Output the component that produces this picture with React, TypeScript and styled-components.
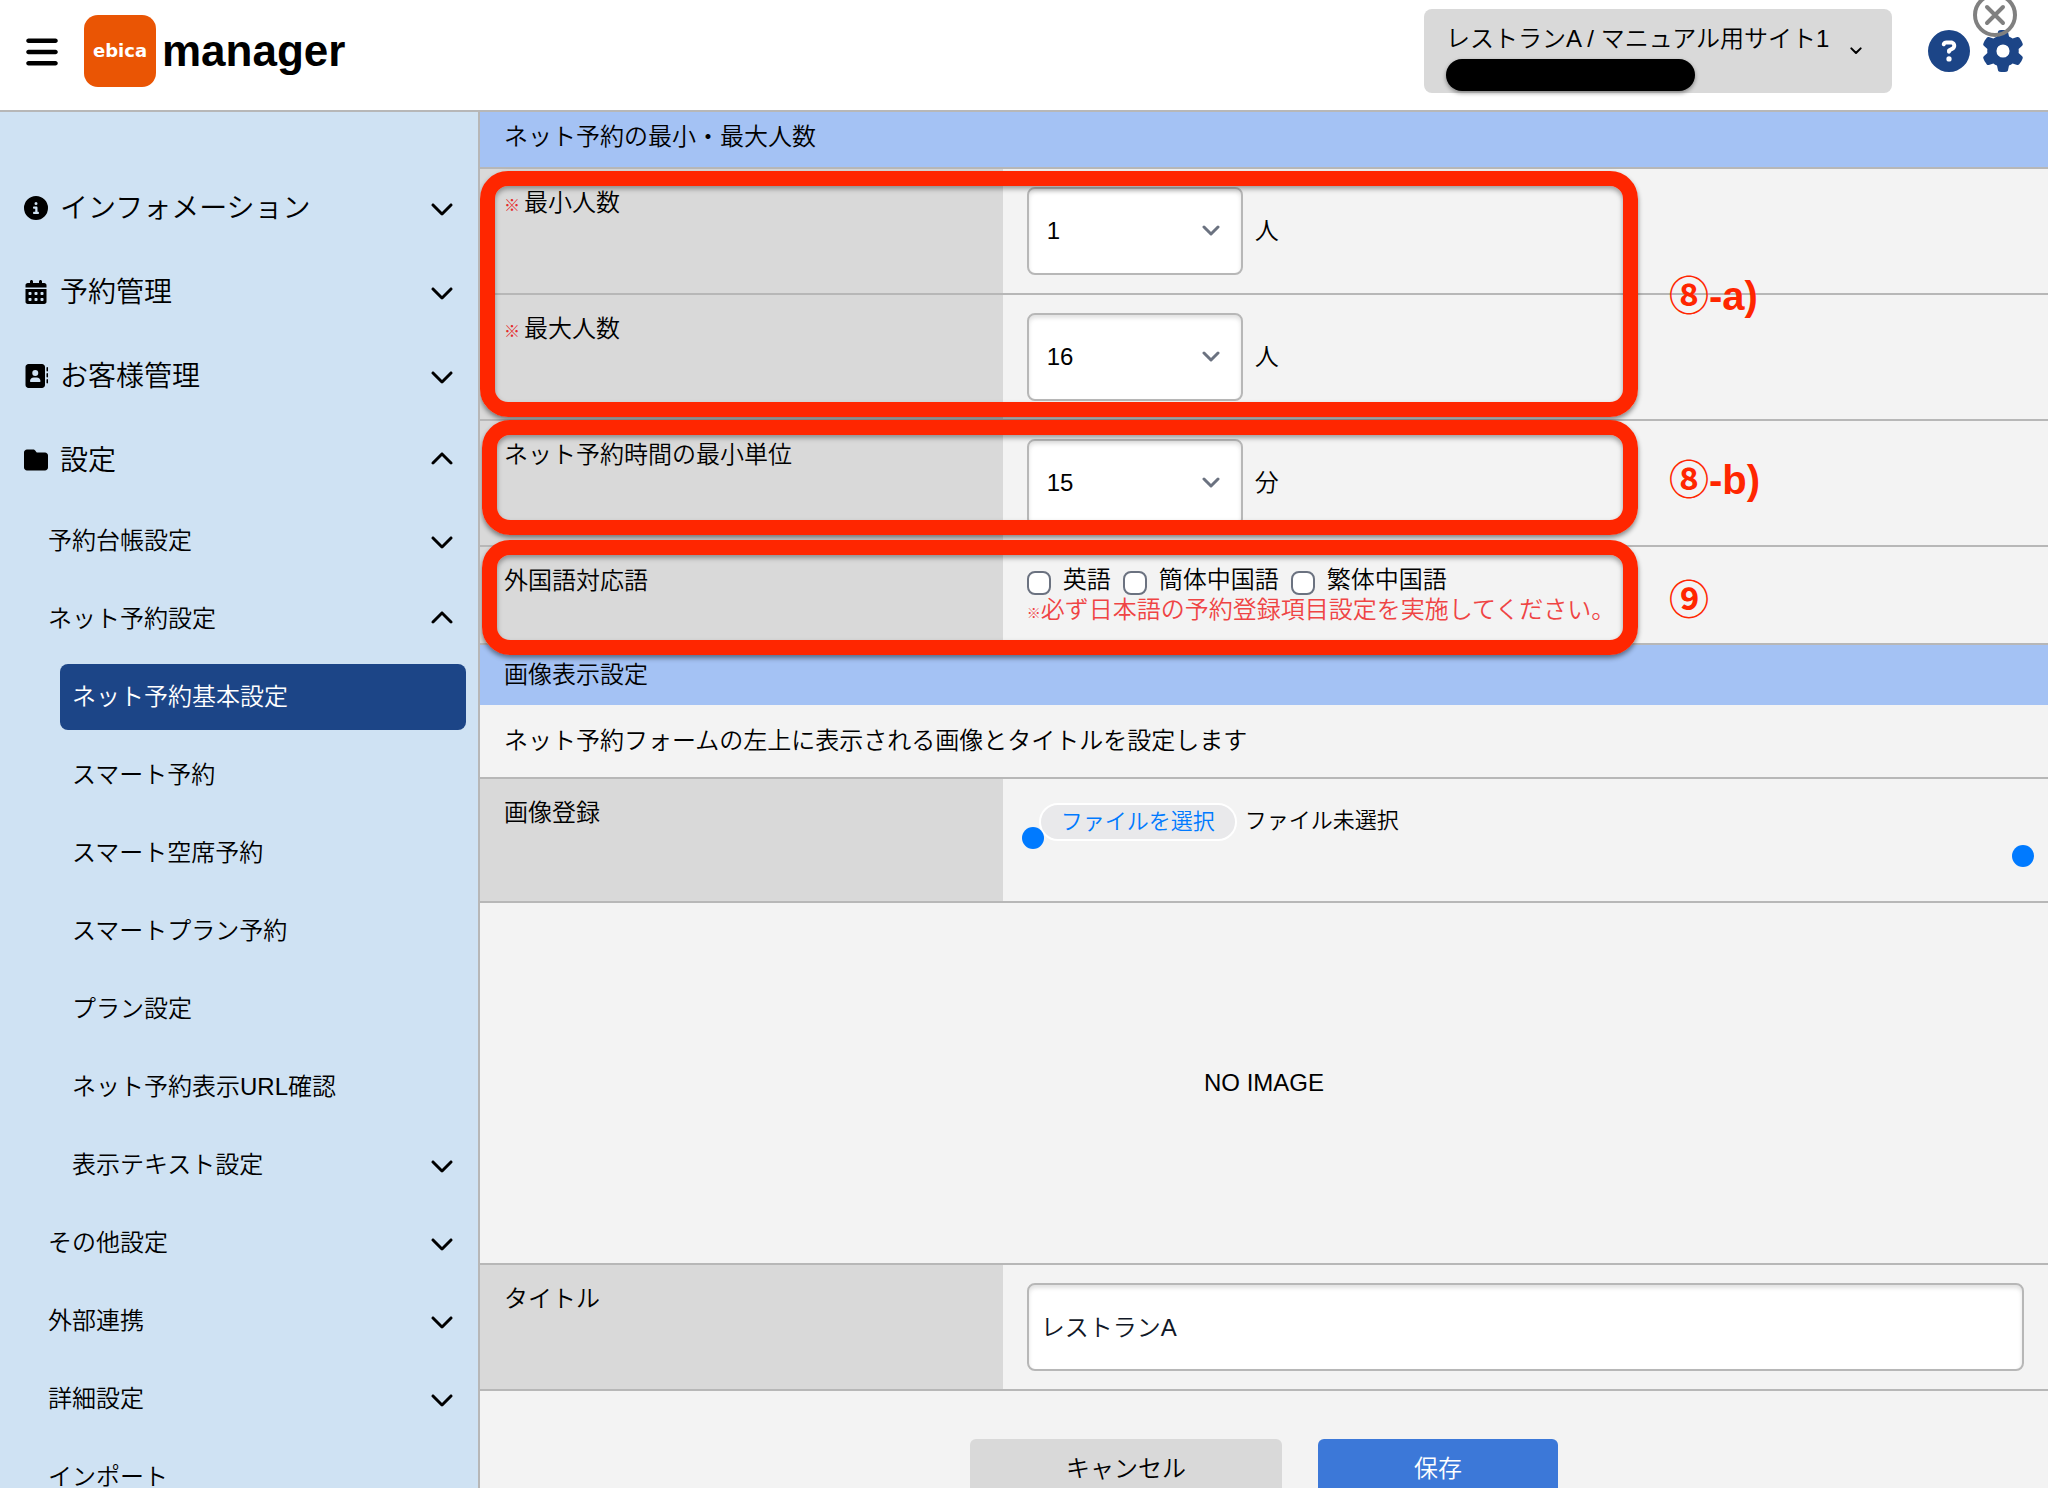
import React from "react";
import styled, { createGlobalStyle } from "styled-components";
import {
  FaAddressBook,
  FaBars,
  FaCalendarDays,
  FaChevronDown,
  FaChevronUp,
  FaCircleInfo,
  FaCircleQuestion,
  FaFolder,
  FaGear,
} from "react-icons/fa6";

const color = {
  line: "#b7b7b7",
  sidebar: "#cfe2f3",
  section: "#a4c2f4",
  label: "#d9d9d9",
  page: "#f3f3f3",
  navy: "#1c4587",
  save: "#3c78d8",
  mark: "#ff2600",
  note: "#ef4444",
  handle: "#007aff",
};

const GlobalStyle = createGlobalStyle`
  *, *::before, *::after { box-sizing: border-box; }
  body {
    margin: 0;
    background: ${color.page};
    color: #000;
    font-family: "Liberation Sans", "Noto Sans CJK JP", sans-serif;
    font-size: 24px;
    font-weight: 350;
    line-height: 36px;
  }
  button, input, select { font: inherit; color: inherit; margin: 0; }
  button { border: 0; background: none; padding: 0; cursor: pointer; }
`;

const Shell = styled.div`
  display: flex;
  flex-direction: column;
  height: 100vh;
  overflow: hidden;
`;

const Header = styled.header`
  position: relative;
  z-index: 2;
  flex: none;
  display: flex;
  align-items: flex-start;
  height: 112px;
  padding: 9px 24px 0;
  background: #fff;
  border-bottom: 2px solid ${color.line};
`;

const MenuButton = styled.button`
  display: flex;
  align-items: center;
  height: 86px;
  margin-right: 24px;
  font-size: 36px;
`;

const Brand = styled.a`
  display: flex;
  align-items: center;
  gap: 6px;
  height: 84px;
  color: #000;
  font-size: 44px;
  font-weight: 700;
  line-height: 48px;
  text-decoration: none;
`;

const BrandMark = styled.span`
  display: flex;
  align-items: center;
  justify-content: center;
  width: 72px;
  height: 72px;
  border-radius: 14px;
  background: #ea5504;
  color: #fff;
  font-family: "DejaVu Sans", sans-serif;
  font-size: 18px;
`;

const HeaderTools = styled.div`
  display: flex;
  align-items: center;
  margin-left: auto;
  height: 84px;
`;

const SiteButton = styled.button`
  display: flex;
  align-items: center;
  justify-content: space-between;
  width: 468px;
  height: 84px;
  margin-right: 36px;
  padding: 0 30px 0 22px;
  border-radius: 8px;
  background: ${color.label};
  text-align: left;
  white-space: nowrap;
`;

const SiteLines = styled.span`
  display: flex;
  flex-direction: column;
  padding-top: 10px;
  height: 84px;
  line-height: 40px;
`;

const Redacted = styled.span`
  width: 249px;
  height: 32px;
  border-radius: 16px;
  background: #000;
  box-shadow: 0 2px 4px rgba(0, 0, 0, 0.4);
`;

const ToolButton = styled.button`
  position: relative;
  display: flex;
  margin-right: 12px;
  color: ${color.navy};
  font-size: 42px;

  &:last-child {
    margin-right: 0;
  }
`;

const CloseButton = styled.button`
  position: absolute;
  top: -7px;
  right: 31px;
  display: flex;
`;

const Body = styled.div`
  flex: 1;
  display: flex;
  min-height: 0;
`;

const Sidebar = styled.nav`
  flex: none;
  width: 480px;
  padding: 54px 12px 0 0;
  background: ${color.sidebar};
  border-right: 2px solid ${color.line};
`;

const List = styled.ul`
  margin: 0;
  padding: 0;
  list-style: none;
`;

const NavGroup = styled.button`
  display: flex;
  align-items: center;
  gap: 12px;
  width: 100%;
  height: 84px;
  padding: 0 12px 0 24px;
  font-size: 28px;

  span {
    padding-top: 2px;
  }
  svg {
    width: 24px;
    height: 24px;
  }
  svg:last-child {
    margin-left: auto;
  }
`;

const NavItem = styled.a<{ $level: 1 | 2; $active?: boolean }>`
  display: flex;
  align-items: center;
  justify-content: space-between;
  height: 66px;
  margin: 0 0 12px ${(p) => (p.$level === 2 ? 60 : 36)}px;
  padding: 0 12px;
  border-radius: 8px;
  background: ${(p) => (p.$active ? color.navy : "transparent")};
  color: ${(p) => (p.$active ? "#fff" : "#000")};
  text-decoration: none;
`;

const SubList = styled(List)`
  padding-top: 6px;

  ${NavItem} svg {
    flex: none;
    width: 24px;
    height: 24px;
  }
`;

const Main = styled.main`
  flex: 1;
  min-width: 0;
  overflow: hidden;
`;

/* The form is scrolled a little way under the header. */
const Form = styled.form`
  margin-top: -5px;
`;

const SectionTitle = styled.h2<{ $ruled?: boolean }>`
  margin: 0;
  padding: 12px 24px;
  background: ${color.section};
  border-bottom: ${(p) => (p.$ruled ? `2px solid ${color.line}` : "0")};
  font-size: 24px;
  font-weight: inherit;
`;

const Description = styled.p`
  margin: 0;
  padding: 18px 24px;
  border-bottom: 2px solid ${color.line};
`;

const Group = styled.div`
  position: relative;
`;

const Row = styled.div`
  display: grid;
  grid-template-columns: 1fr 2fr;
  border-bottom: 2px solid ${color.line};
`;

const LabelCell = styled.div`
  padding: 16px 24px;
  background: ${color.label};
`;

const ValueCell = styled.div`
  position: relative;
  display: flex;
  align-items: center;
  gap: 12px;
  min-width: 0;
  padding: 18px 24px;
`;

const StackCell = styled(ValueCell)`
  flex-direction: column;
  align-items: flex-start;
  gap: 0;
  line-height: 30px;
`;

const Required = styled.span`
  margin-right: 4px;
  color: #e52b2b;
  font-size: 16px;
  line-height: 16px;
`;

const SelectBox = styled.span`
  position: relative;
  width: 216px;

  svg {
    position: absolute;
    top: 38px;
    right: 23px;
    pointer-events: none;
  }
`;

const fieldFrame = `
  width: 100%;
  height: 88px;
  border: 2px solid ${color.line};
  border-radius: 8px;
  background: #fff;
  box-shadow: inset 0 3px 4px rgba(0, 0, 0, 0.12);
`;

const Select = styled.select`
  ${fieldFrame}
  appearance: none;
  padding: 0 18px;
`;

const TextInput = styled.input`
  ${fieldFrame}
  padding: 0 12px 4px;
  color: #111827;
`;

const Checks = styled.div`
  display: flex;
  gap: 12px;
`;

const Check = styled.label`
  display: flex;
  gap: 12px;
`;

const CheckInput = styled.input`
  appearance: none;
  width: 24px;
  height: 24px;
  margin-top: 6px;
  border: 2px solid #6b7280;
  border-radius: 8px;
  background: #fff;
`;

const Note = styled.p`
  margin: 0;
  color: ${color.note};

  small {
    font-size: 14px;
    font-weight: 700;
    line-height: 16px;
  }
`;

const FileCell = styled(ValueCell)`
  align-items: flex-start;
  gap: 8px;
  height: 122px;
  padding: 24px 36px;
  font-size: 22px;
`;

const FileInput = styled.input`
  position: absolute;
  width: 1px;
  height: 1px;
  opacity: 0;
`;

const FileButton = styled.label`
  padding: 0 20px;
  border: 2px solid #fff;
  border-radius: 20px;
  background: #e9e9eb;
  color: ${color.handle};
  line-height: 34px;
`;

const Handle = styled.span<{ $end?: boolean }>`
  position: absolute;
  top: ${(p) => (p.$end ? 66 : 48)}px;
  ${(p) => (p.$end ? "right: 14px" : "left: 19px")};
  width: 22px;
  height: 22px;
  border-radius: 50%;
  background: ${color.handle};
`;

const Preview = styled.div`
  display: flex;
  align-items: center;
  justify-content: center;
  height: 362px;
  border-bottom: 2px solid ${color.line};
`;

const Actions = styled.div`
  display: flex;
  justify-content: center;
  gap: 36px;
  padding: 48px 24px;
`;

const ActionButton = styled.button<{ $primary?: boolean }>`
  width: ${(p) => (p.$primary ? 240 : 312)}px;
  height: 60px;
  border-radius: 6px;
  background: ${(p) => (p.$primary ? color.save : color.label)};
  color: ${(p) => (p.$primary ? "#fff" : "#000")};
`;

const Callout = styled.div<{ $top: number; $bottom: number; $left: number }>`
  position: absolute;
  z-index: 1;
  top: ${(p) => p.$top}px;
  right: 410px;
  bottom: ${(p) => p.$bottom}px;
  left: ${(p) => p.$left}px;
  display: flex;
  align-items: center;
  border: 15px solid ${color.mark};
  border-radius: 28px;
  box-shadow: 0 3px 5px rgba(0, 0, 0, 0.45), inset 0 3px 5px rgba(0, 0, 0, 0.35);
  pointer-events: none;
`;

const CalloutText = styled.strong`
  position: absolute;
  left: calc(100% + 46px);
  padding-top: 4px;
  color: ${color.mark};
  font-size: 40px;
  font-weight: 700;
  line-height: 48px;
  white-space: nowrap;
`;

function SmallChevron({ width, stroke }: { width: number; stroke: string }) {
  return (
    <svg width={width} height={(width * 2) / 3} viewBox="0 0 18 12" fill="none" aria-hidden="true">
      <path d="M2 2l7 7 7-7" stroke={stroke} strokeWidth="3" strokeLinecap="round" strokeLinejoin="round" />
    </svg>
  );
}

function UnitSelect({ id, value, unit }: { id: string; value: string; unit: string }) {
  return (
    <ValueCell>
      <SelectBox>
        <Select id={id} defaultValue={value}>
          <option>{value}</option>
        </Select>
        <SmallChevron width={18} stroke="#6b7280" />
      </SelectBox>
      <span>{unit}</span>
    </ValueCell>
  );
}

function Mark({ top, bottom, left = 2, children }: { top: number; bottom: number; left?: number; children: string }) {
  return (
    <Callout $top={top} $bottom={bottom} $left={left}>
      <CalloutText>{children}</CalloutText>
    </Callout>
  );
}

type Item = { text: string; level: 1 | 2; open?: boolean; active?: boolean };

const groups = [
  { text: "インフォメーション", icon: FaCircleInfo, open: false },
  { text: "予約管理", icon: FaCalendarDays, open: false },
  { text: "お客様管理", icon: FaAddressBook, open: false },
  { text: "設定", icon: FaFolder, open: true },
];

const items: Item[] = [
  { text: "予約台帳設定", level: 1, open: false },
  { text: "ネット予約設定", level: 1, open: true },
  { text: "ネット予約基本設定", level: 2, active: true },
  { text: "スマート予約", level: 2 },
  { text: "スマート空席予約", level: 2 },
  { text: "スマートプラン予約", level: 2 },
  { text: "プラン設定", level: 2 },
  { text: "ネット予約表示URL確認", level: 2 },
  { text: "表示テキスト設定", level: 2, open: false },
  { text: "その他設定", level: 1, open: false },
  { text: "外部連携", level: 1, open: false },
  { text: "詳細設定", level: 1, open: false },
  { text: "インポート", level: 1 },
];

const languages = ["英語", "簡体中国語", "繁体中国語"];

export default function App() {
  return (
    <Shell>
      <GlobalStyle />
      <Header>
        <MenuButton type="button" aria-label="メニュー">
          <FaBars />
        </MenuButton>
        <Brand href="#">
          <BrandMark>ebica</BrandMark>
          manager
        </Brand>
        <HeaderTools>
          <SiteButton type="button">
            <SiteLines>
              レストランA / マニュアル用サイト1
              <Redacted />
            </SiteLines>
            <SmallChevron width={12} stroke="#000" />
          </SiteButton>
          <ToolButton type="button" aria-label="ヘルプ">
            <FaCircleQuestion />
          </ToolButton>
          <ToolButton type="button" aria-label="設定">
            <FaGear />
          </ToolButton>
        </HeaderTools>
        <CloseButton type="button" aria-label="閉じる">
          <svg width="44" height="44" viewBox="0 0 44 44" fill="none" stroke="#808080">
            <circle cx="22" cy="22" r="20" strokeWidth="4" />
            <path d="M14 14l16 16M30 14L14 30" strokeWidth="4" strokeLinecap="round" />
          </svg>
        </CloseButton>
      </Header>

      <Body>
        <Sidebar>
          <List>
            {groups.map(({ text, icon: Icon, open }) => (
              <li key={text}>
                <NavGroup type="button" aria-expanded={open}>
                  <Icon />
                  <span>{text}</span>
                  {open ? <FaChevronUp /> : <FaChevronDown />}
                </NavGroup>
              </li>
            ))}
          </List>
          <SubList>
            {items.map(({ text, level, open, active }) => (
              <li key={text}>
                <NavItem href="#" $level={level} $active={active}>
                  {text}
                  {open === true && <FaChevronUp />}
                  {open === false && <FaChevronDown />}
                </NavItem>
              </li>
            ))}
          </SubList>
        </Sidebar>

        <Main>
          <Form onSubmit={(e) => e.preventDefault()}>
            <SectionTitle $ruled>ネット予約の最小・最大人数</SectionTitle>
            <Group>
              <Row>
                <LabelCell>
                  <Required>※</Required>
                  <label htmlFor="min">最小人数</label>
                </LabelCell>
                <UnitSelect id="min" value="1" unit="人" />
              </Row>
              <Row>
                <LabelCell>
                  <Required>※</Required>
                  <label htmlFor="max">最大人数</label>
                </LabelCell>
                <UnitSelect id="max" value="16" unit="人" />
              </Row>
              <Mark top={2} bottom={4} left={0}>
                ⑧-a)
              </Mark>
            </Group>
            <Group>
              <Row>
                <LabelCell>
                  <label htmlFor="unit">ネット予約時間の最小単位</label>
                </LabelCell>
                <UnitSelect id="unit" value="15" unit="分" />
              </Row>
              <Mark top={-1} bottom={12}>
                ⑧-b)
              </Mark>
            </Group>
            <Group>
              <Row role="group" aria-labelledby="languages">
                <LabelCell id="languages">外国語対応語</LabelCell>
                <StackCell>
                  <Checks>
                    {languages.map((name) => (
                      <Check key={name}>
                        <CheckInput type="checkbox" />
                        {name}
                      </Check>
                    ))}
                  </Checks>
                  <Note>
                    <small>※</small>必ず日本語の予約登録項目設定を実施してください。
                  </Note>
                </StackCell>
              </Row>
              <Mark top={-7} bottom={-10}>
                ⑨
              </Mark>
            </Group>

            <SectionTitle>画像表示設定</SectionTitle>
            <Description>ネット予約フォームの左上に表示される画像とタイトルを設定します</Description>
            <Row>
              <LabelCell>画像登録</LabelCell>
              <FileCell>
                <FileInput id="image" type="file" />
                <FileButton htmlFor="image">ファイルを選択</FileButton>
                <span>ファイル未選択</span>
                <Handle />
                <Handle $end />
              </FileCell>
            </Row>
            <Preview>NO IMAGE</Preview>
            <Row>
              <LabelCell>
                <label htmlFor="title">タイトル</label>
              </LabelCell>
              <ValueCell>
                <TextInput id="title" type="text" defaultValue="レストランA" />
              </ValueCell>
            </Row>
            <Actions>
              <ActionButton type="button">キャンセル</ActionButton>
              <ActionButton type="submit" $primary>
                保存
              </ActionButton>
            </Actions>
          </Form>
        </Main>
      </Body>
    </Shell>
  );
}
